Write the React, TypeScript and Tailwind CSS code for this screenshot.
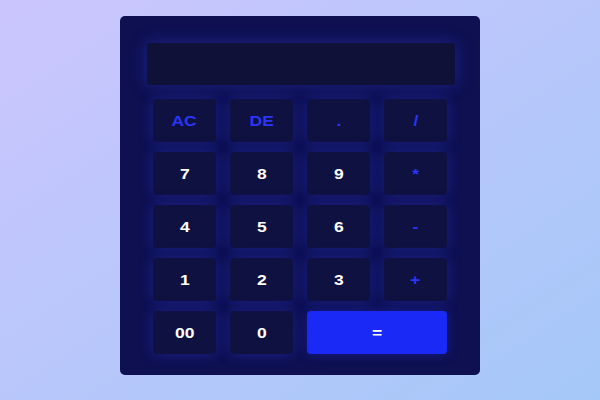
const keys: { label: string; accent?: boolean; wide?: boolean; primary?: boolean }[] = [
  { label: "AC", accent: true },
  { label: "DE", accent: true },
  { label: ".", accent: true },
  { label: "/", accent: true },
  { label: "7" },
  { label: "8" },
  { label: "9" },
  { label: "*", accent: true },
  { label: "4" },
  { label: "5" },
  { label: "6" },
  { label: "-", accent: true },
  { label: "1" },
  { label: "2" },
  { label: "3" },
  { label: "+", accent: true },
  { label: "00" },
  { label: "0" },
  { label: "=", wide: true, primary: true },
];

export default function App() {
  return (
    <div
      className="w-[600px] h-[400px] flex justify-center pt-4 bg-gradient-to-br from-[#cbc5fd] to-[#a4c8f8]"
      style={{ fontFamily: '"Liberation Sans", Arial, sans-serif' }}
    >
      <div className="w-[360px] h-[359px] bg-[#0e1052] rounded-[5px] pt-[27px] pl-[27px] pr-[25px]">
        <div className="h-[42px] bg-[#0f1138] rounded-[3px] shadow-[0_0_16px_rgba(45,55,190,0.5)]" />
        <div className="mt-[14px] ml-[6px] w-[294px] grid grid-cols-4 gap-x-[14px] gap-y-[10px]">
          {keys.map((k) => (
            <button
              key={k.label}
              className={
                "h-[43px] rounded-[4px] flex items-center justify-center text-[14px] font-bold " +
                (k.wide ? "col-span-2 " : "") +
                (k.primary
                  ? "bg-[#1b29f7] text-white shadow-[0_0_12px_rgba(40,50,230,0.35)]"
                  : "bg-[#0f1140] shadow-[0_0_14px_rgba(45,55,200,0.45)] " +
                    (k.accent ? "text-[#2a36f5]" : "text-white"))
              }
            >
              <span className="inline-block scale-x-[1.25] translate-y-[1px]">{k.label}</span>
            </button>
          ))}
        </div>
      </div>
    </div>
  );
}
